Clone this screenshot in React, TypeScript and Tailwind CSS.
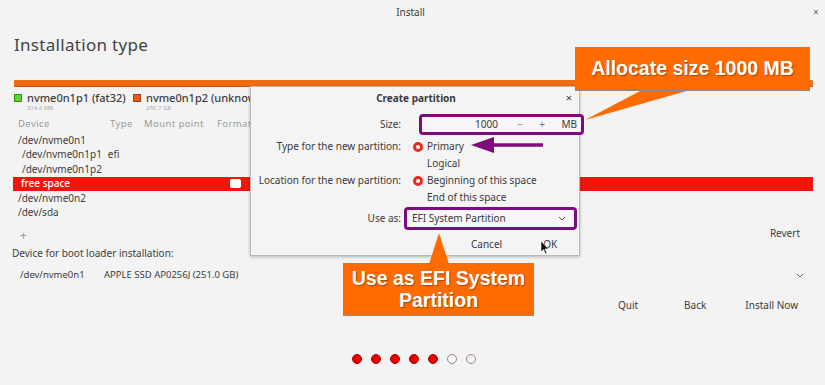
import React from "react"

const rows = [
  { label: "/dev/nvme0n1", pad: "pl-[18px]" },
  { label: "/dev/nvme0n1p1", pad: "pl-[22px]", type: "efi" },
  { label: "/dev/nvme0n1p2", pad: "pl-[22px]" },
  { label: "free space", pad: "pl-[22px]", selected: true },
  { label: "/dev/nvme0n2", pad: "pl-[18px]" },
  { label: "/dev/sda", pad: "pl-[18px]" },
]

function Radio({ on }: { on?: boolean }) {
  if (!on) return <span className="w-[10px]" />
  return (
    <span className="flex h-[10px] w-[10px] items-center justify-center rounded-full bg-[#ea2a1e]">
      <span className="h-[4px] w-[4px] rounded-full bg-white" />
    </span>
  )
}

function Dialog() {
  return (
    <div className="absolute left-[250px] top-[86px] flex h-[170px] w-[330px] flex-col border border-[#b9b9b9] bg-[#f4f4f4] text-[10px] text-[#3a3a3a] shadow-[0_1px_3px_rgba(0,0,0,0.25)]">
      <div className="flex h-[21px] shrink-0 items-center justify-center pl-[22px] pt-[2px] font-bold">
        <span className="flex-1 text-center">Create partition</span>
        <span className="w-[20px] text-center text-[11px] font-normal">×</span>
      </div>
      <div className="grid grid-cols-[150px_1fr] items-center gap-x-[12px] pt-[6px]">
        <span className="text-right">Size:</span>
        <div className="relative h-[21px]">
          <div className="absolute left-[6px] top-0 flex h-[21px] w-[165px] items-center rounded-[4px] border-[3px] border-[#7e0b7e] bg-[#f6f6f6] pr-[4px]">
            <span className="w-[76px] text-right">1000</span>
            <span className="w-[25px] text-right text-[#777]">−</span>
            <span className="w-[22px] text-right text-[#777]">+</span>
            <span className="flex-1 text-right">MB</span>
          </div>
        </div>
        <span className="mt-[3px] text-right leading-[17px]">Type for the new partition:</span>
        <span className="mt-[3px] flex items-center gap-[4px] leading-[17px]"><Radio on />Primary</span>
        <span />
        <span className="flex items-center gap-[4px] leading-[17px]"><Radio />Logical</span>
        <span className="text-right leading-[17px]">Location for the new partition:</span>
        <span className="flex items-center gap-[4px] leading-[17px]"><Radio on />Beginning of this space</span>
        <span />
        <span className="flex items-center gap-[4px] leading-[17px]"><Radio />End of this space</span>
        <span className="mt-[1px] text-right">Use as:</span>
        <div className="mt-[1px] -ml-[9px] flex h-[23px] w-[173px] items-center justify-between rounded-[4px] border-[3px] border-[#7e0b7e] bg-[#f6f6f6] pl-[5px] pr-[8px]">
          <span>EFI System Partition</span>
          <svg width="8" height="5" viewBox="0 0 8 5"><path d="M1 1l3 3 3-3" fill="none" stroke="#555" strokeWidth="1" /></svg>
        </div>
      </div>
      <div className="flex h-[28px] shrink-0 items-center pl-[220px]">
        <span>Cancel</span>
        <span className="ml-[41px]">OK</span>
      </div>
    </div>
  )
}

function Callouts() {
  return (
    <>
      <svg className="pointer-events-none absolute left-0 top-0" width="825" height="385">
        <polygon points="585,120 642,90 690,90" fill="#ff6b00" />
        <polygon points="439,233 429,264 449,264" fill="#ff6b00" />
        <line x1="543" y1="145" x2="485" y2="145" stroke="#7e0b7e" strokeWidth="3.5" />
        <polygon points="471,145 494,137 494,153" fill="#7e0b7e" />
        <path d="M541 241 L541 252 L543.5 249.5 L545.5 254 L547 253.3 L545 249 L548.5 249 Z" fill="#111" stroke="#fff" strokeWidth="0.6" />
      </svg>
      <div className="absolute left-[575px] top-[47px] flex h-[44px] w-[235px] items-center justify-center border-b-[1px] border-[#8a8a8a] bg-[#ff6b00] font-['Liberation_Sans',Arial,sans-serif] text-[19.5px] font-bold text-white [text-shadow:1px_1px_1px_rgba(0,0,0,0.35)]">
        Allocate size 1000 MB
      </div>
      <div className="absolute left-[343px] top-[263px] flex h-[53px] w-[191px] flex-col items-center justify-center border-b-[1px] border-[#8a8a8a] bg-[#ff6b00] font-['Liberation_Sans',Arial,sans-serif] text-[19.5px] font-bold leading-[22px] text-white [text-shadow:1px_1px_1px_rgba(0,0,0,0.35)]">
        <span>Use as EFI System</span>
        <span>Partition</span>
      </div>
    </>
  )
}

export default function App() {
  return (
    <div className="relative h-[385px] w-[825px] overflow-hidden bg-[#f3f3f3] font-['Noto_Sans','Open_Sans',sans-serif] text-[#3d3d3d]">
      <div className="flex h-[24px] items-center text-[10px]">
        <span className="flex-1 pl-[8px] text-center">Install</span>
        <span className="w-[12px] text-[10px] text-[#666]">×</span>
      </div>
      <h1 className="mt-[10px] pl-[14px] text-[17px] leading-[22px] tracking-[0.3px] text-[#444]">Installation type</h1>

      <div className="ml-[14px] mr-[12px] mt-[24px] h-[7px] rounded-[1px] border-b border-[#c8520e] bg-[#f06c14]" />

      <div className="mt-[4px] flex pl-[14px] text-[11px] leading-[13px]">
        <div className="w-[119px]">
          <div className="flex items-center gap-[5px]">
            <span className="h-[8px] w-[8px] border border-[#3c8a16] bg-[#5fd62a]" />
            <span className="font-medium">nvme0n1p1 (fat32)</span>
          </div>
          <div className="pl-[13px] text-[6px] leading-[8px] text-[#aaa]">314.6 MB</div>
        </div>
        <div>
          <div className="flex items-center gap-[5px]">
            <span className="h-[8px] w-[8px] border border-[#a5400e] bg-[#ea5a1c]" />
            <span className="font-medium">nvme0n1p2 (unknown)</span>
          </div>
          <div className="pl-[13px] text-[6px] leading-[8px] text-[#aaa]">250.7 GB</div>
        </div>
      </div>

      <div className="mt-[5px] flex h-[14px] items-center pl-[18px] text-[9.5px] tracking-[0.4px] text-[#9a9a9a]">
        <span className="w-[92px]">Device</span>
        <span className="w-[34px]">Type</span>
        <span className="w-[73px]">Mount point</span>
        <span>Format?</span>
      </div>

      <div className="mt-[2px] flex flex-col text-[10px]">
        {rows.map((r) => (
          <div
            key={r.label}
            className={
              r.selected
                ? "ml-[13px] mr-[12px] flex h-[14.5px] items-center bg-[#f2150c] pl-[8px] font-medium text-white"
                : "flex h-[14.5px] items-center " + r.pad
            }
          >
            <span className={r.type ? "" : "w-[93px]"}>{r.label}</span>
            {r.type && <span className="ml-[6px]">{r.type}</span>}
            {r.selected && <span className="ml-[116px] h-[9px] w-[11px] rounded-[2px] bg-white" />}
          </div>
        ))}
      </div>

      <div className="flex h-[24px] items-start justify-between pl-[20px] pr-[25px] text-[10px]">
        <span className="mt-[9px] text-[12px] leading-[14px] text-[#999]">+</span>
        <span className="mt-[6px]">Revert</span>
      </div>

      <div className="mt-[2px] pl-[12px] text-[10px]">Device for boot loader installation:</div>
      <div className="mt-[7px] flex items-center pl-[20px] pr-[21px] text-[9.5px]">
        <span className="w-[84px]">/dev/nvme0n1</span>
        <span className="flex-1">APPLE SSD AP0256J (251.0 GB)</span>
        <svg width="8" height="5" viewBox="0 0 8 5"><path d="M1 1l3 3 3-3" fill="none" stroke="#666" strokeWidth="1" /></svg>
      </div>

      <div className="mt-[16px] flex justify-end pr-[27px] text-[10px]">
        <span className="w-[30px] border-b border-transparent text-center">Quit</span>
        <span className="ml-[41px]">Back</span>
        <span className="ml-[39px]">Install Now</span>
      </div>

      <div className="mt-[40px] flex justify-center gap-[9px] pl-[2px]">
        {[0, 1, 2, 3, 4, 5, 6].map((i) => (
          <span
            key={i}
            className={
              i < 5
                ? "h-[10px] w-[10px] rounded-full border border-[#b00000] bg-[#e60000]"
                : "h-[10px] w-[10px] rounded-full border border-[#a08478] bg-[#f6f6f6]"
            }
          />
        ))}
      </div>

      <Dialog />
      <Callouts />
    </div>
  )
}
